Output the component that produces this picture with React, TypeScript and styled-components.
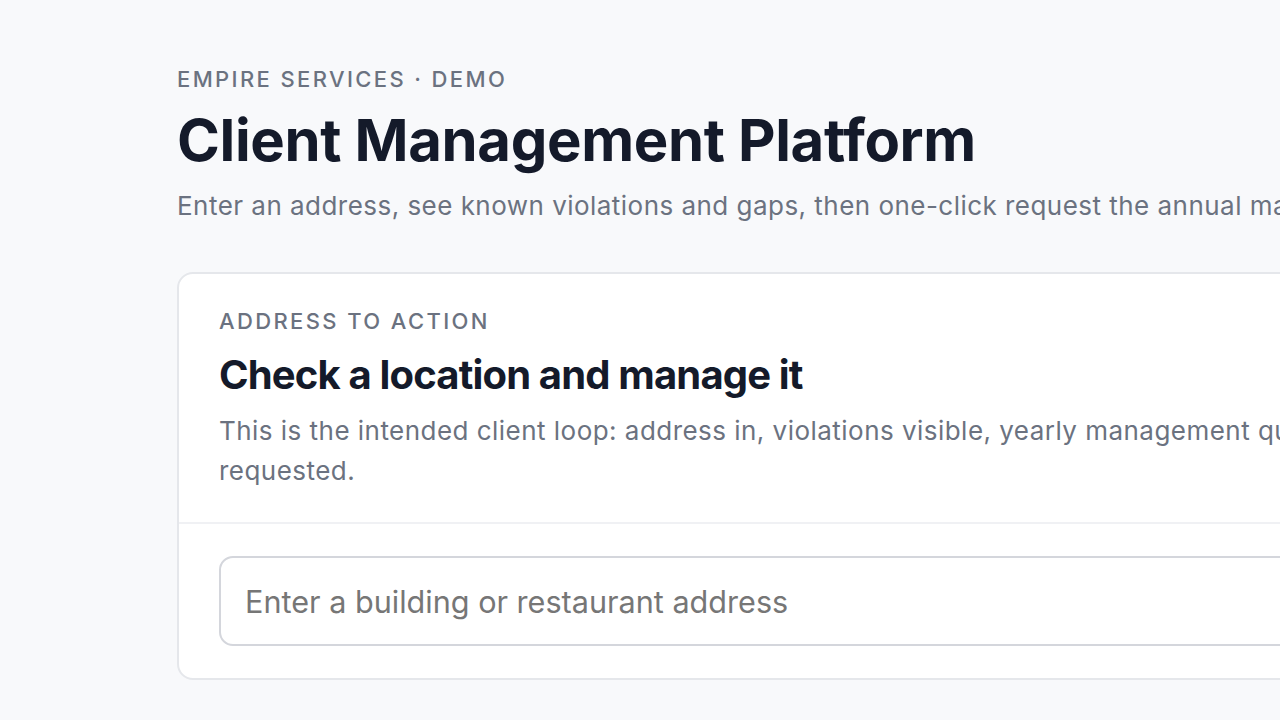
import React from 'react';
import styled, { createGlobalStyle } from 'styled-components';

const GlobalStyle = createGlobalStyle`
  html, body {
    margin: 0;
    padding: 0;
    background: #f8f9fb;
    overflow: hidden;
  }
  body {
    font-family: Inter, "Noto Sans", "Liberation Sans", sans-serif;
    -webkit-font-smoothing: antialiased;
  }
`;

const Page = styled.main`
  width: 1600px;
  padding: 64px 0 40px 177px;
  box-sizing: content-box;
`;

const Eyebrow = styled.div`
  font-size: 22px;
  line-height: 1.4;
  font-weight: 500;
  letter-spacing: 0.108em;
  text-transform: uppercase;
  color: #6b7280;
`;

const PageTitle = styled.h1`
  margin: 11px 0 0;
  font-size: 58px;
  line-height: 1.2;
  font-weight: 700;
  letter-spacing: -0.006em;
  color: #141a2a;
`;

const Lead = styled.p`
  margin: 11px 0 0;
  font-size: 26px;
  line-height: 1.5;
  letter-spacing: 0.018em;
  color: #6b7280;
  white-space: nowrap;
`;

const Card = styled.section`
  margin-top: 47px;
  background: #ffffff;
  border: 2px solid #e5e7eb;
  border-radius: 16px;
`;

const CardHeader = styled.header`
  padding: 32px 40px 31px;
  border-bottom: 2px solid #f0f1f4;
`;

const CardTitle = styled.h2`
  margin: 13px 0 0;
  font-size: 40px;
  line-height: 1.25;
  font-weight: 700;
  letter-spacing: -0.021em;
  color: #141a2a;
`;

const CardText = styled.p`
  margin: 11px 0 0;
  font-size: 26px;
  line-height: 40px;
  letter-spacing: 0.018em;
  color: #6b7280;
  max-width: 1200px;
`;

const CardBody = styled.div`
  padding: 32px 40px 32px;
`;

const AddressInput = styled.input`
  display: block;
  width: 100%;
  box-sizing: border-box;
  height: 90px;
  padding: 0 24px;
  border: 2px solid #d4d6dc;
  border-radius: 14px;
  background: #ffffff;
  font-family: inherit;
  font-size: 30.6px;
  color: #141a2a;
  outline: none;

  &::placeholder {
    color: #767676;
  }
`;

export default function App() {
  return (
    <>
      <GlobalStyle />
      <Page>
        <Eyebrow>Empire Services · Demo</Eyebrow>
        <PageTitle>Client Management Platform</PageTitle>
        <Lead>
          Enter an address, see known violations and gaps, then one-click request the annual management quote.
        </Lead>
        <Card>
          <CardHeader>
            <Eyebrow>Address to action</Eyebrow>
            <CardTitle>Check a location and manage it</CardTitle>
            <CardText>
              This is the intended client loop: address in, violations visible, yearly management quote
              requested.
            </CardText>
          </CardHeader>
          <CardBody>
            <AddressInput placeholder="Enter a building or restaurant address" />
          </CardBody>
        </Card>
      </Page>
    </>
  );
}
